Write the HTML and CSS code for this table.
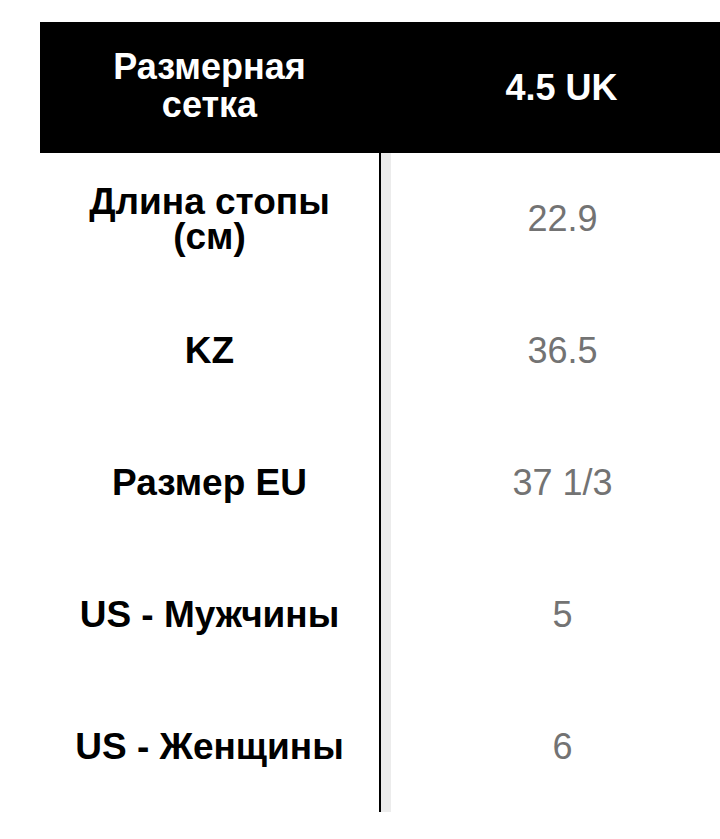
FILE: index.html
```html
<!DOCTYPE html>
<html lang="ru">
<head>
<meta charset="utf-8">
<title>Размерная сетка</title>
<link rel="stylesheet" href="styles.css">
</head>
<body>
<div class="size-table">
  <div class="cell head label">Размерная<br>сетка</div>
  <div class="cell head value-head">4.5 UK</div>

  <div class="cell label two-line">Длина стопы<br>(см)</div>
  <div class="cell value">22.9</div>

  <div class="cell label">KZ</div>
  <div class="cell value">36.5</div>

  <div class="cell label">Размер EU</div>
  <div class="cell value">37&nbsp;1/3</div>

  <div class="cell label">US - Мужчины</div>
  <div class="cell value">5</div>

  <div class="cell label">US - Женщины</div>
  <div class="cell value">6</div>
</div>
</body>
</html>
```

FILE: styles.css
```css
html, body {
  margin: 0;
  padding: 0;
  background: #fff;
  overflow: hidden;
}

body {
  font-family: "Liberation Sans", Arial, sans-serif;
}

.size-table {
  margin: 22px 0 0 40px;
  width: 704px;
  display: grid;
  grid-template-columns: 339px 365px;
  grid-template-rows: 131px;
  grid-auto-rows: 132px;
}

.cell {
  display: flex;
  align-items: center;
  justify-content: center;
  text-align: center;
  font-size: 36px;
}

.head {
  background: #000;
  color: #fff;
  font-weight: bold;
  line-height: 38px;
}

.label {
  font-weight: bold;
  color: #000;
  font-size: 37px;
}

.head.label {
  color: #fff;
  font-size: 36px;
  padding-bottom: 4px;
}

.two-line {
  line-height: 35px;
}

.value {
  color: #737373;
  border-left: 2px solid #000;
  background: linear-gradient(to right, #ececec 10px, #fff 10px);
}

.size-table > .value:last-child {
  margin-bottom: 1px;
}
```
